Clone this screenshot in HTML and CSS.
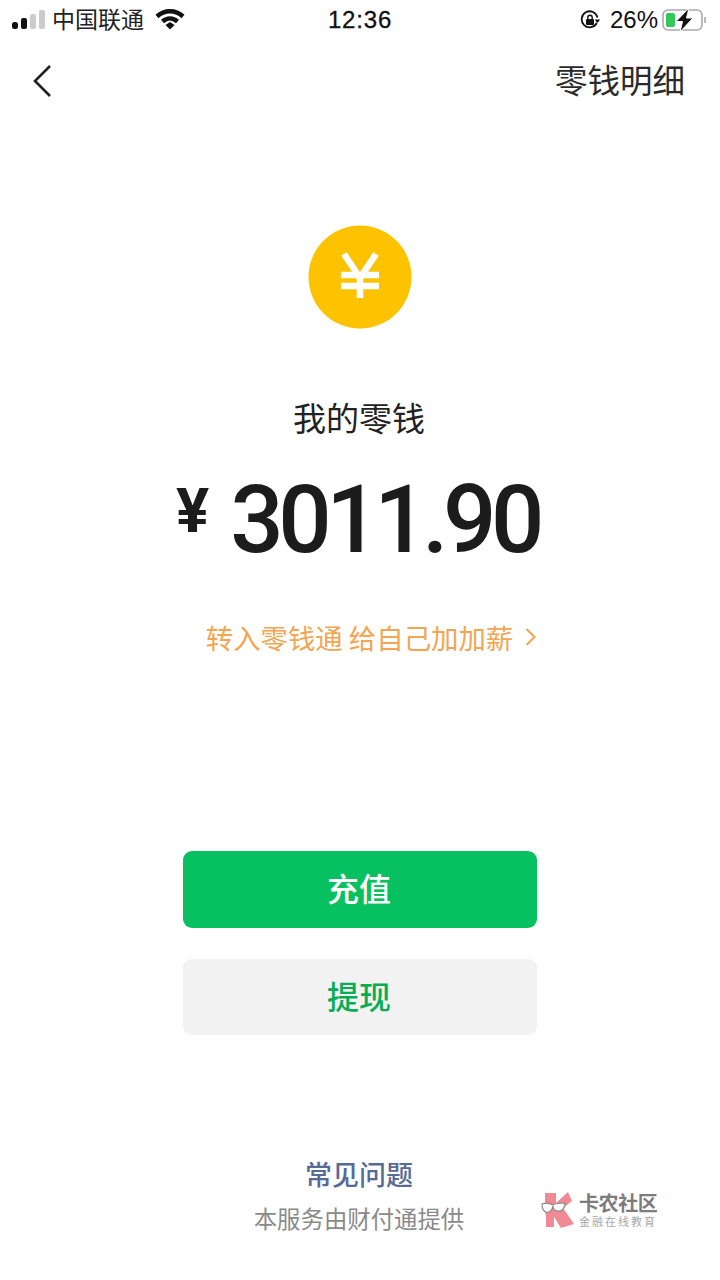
FILE: index.html
```html
<!DOCTYPE html>
<html lang="zh-CN">
<head>
<meta charset="utf-8">
<title>我的零钱</title>
<link rel="stylesheet" href="styles.css">
</head>
<body>
<div class="page">
  <header class="status">
    <div class="status-left">
      <svg class="signal" width="34" height="20" viewBox="0 0 34 20"><rect x="0" y="12" width="6" height="7" rx="2.5" fill="#111"/><rect x="9" y="8" width="6" height="11" rx="2" fill="#111"/><rect x="18" y="4" width="6" height="15" rx="2" fill="#ccc"/><rect x="27" y="0" width="6" height="19" rx="2" fill="#ccc"/></svg>
      <span class="carrier">中国联通</span>
      <svg class="wifi" width="30" height="22" viewBox="0 0 30 22"><path d="M2 8.500C9.500 1.500 20.500 1.500 28 8.500" fill="none" stroke="#111" stroke-width="4.500"/><path d="M7.500 13.500C12 9.500 18 9.500 22.500 13.500" fill="none" stroke="#111" stroke-width="4.500"/><path d="M10.500 17L15 14L19.500 17L15 21.500Z" fill="#111"/></svg>
    </div>
    <div class="time">12:36</div>
    <div class="status-right">
      <svg class="lock" width="20" height="20" viewBox="0 0 20 20"><path d="M16.800 13A8 8 0 1 1 17.500 7.500" fill="none" stroke="#111" stroke-width="1.800"/><path d="M15 9.500H20L18 12.500H16.500Z" fill="#111"/><rect x="6" y="9" width="8" height="6" rx="1" fill="#111"/><path d="M7.800 9V7.500A2.200 2.200 0 0 1 12.200 7.500V9" fill="none" stroke="#111" stroke-width="1.400"/></svg>
      <span class="percent">26%</span>
      <svg class="battery" width="46" height="24" viewBox="0 0 46 24"><rect x="1" y="2" width="39" height="20" rx="5" fill="none" stroke="#aaa" stroke-width="1.600"/><rect x="4" y="5" width="9" height="14" rx="2" fill="#34c759"/><path d="M43 9V15" stroke="#bbb" stroke-width="2"/><path d="M27 0L14 13.500H20.500L18 24L31 10H24.500Z" fill="#111" stroke="#fff" stroke-width="1"/></svg>
    </div>
  </header>
  <nav class="nav">
    <svg class="back" width="20" height="34" viewBox="0 0 20 34"><path d="M18 2L3 17L18 32" fill="none" stroke="#222" stroke-width="2.600"/></svg>
    <span class="detail">零钱明细</span>
  </nav>
  <main class="main">
    <svg class="coin" width="104" height="104" viewBox="0 0 104 104"><circle cx="52" cy="52" r="51.500" fill="#fdc300"/><path d="M36 29L52 53L68 29M52 53V73M33 50H71M33 61H71" fill="none" stroke="#fff" stroke-width="6.500"/></svg>
    <h1 class="label">我的零钱</h1>
    <div class="amount"><span class="yen">¥</span><span class="value">3011.90</span></div>
    <a class="promo">转入零钱通 给自己加加薪<svg class="promo-arrow" width="11" height="20" viewBox="0 0 11 20"><path d="M1.500 2L9.500 10L1.500 18" fill="none" stroke="#f2a552" stroke-width="2"/></svg></a>
    <div class="actions">
      <button class="btn btn-primary">充值</button>
      <button class="btn btn-secondary">提现</button>
    </div>
  </main>
  <footer class="footer">
    <a class="faq">常见问题</a>
    <p class="provider">本服务由财付通提供</p>
    <div class="mark">
      <svg width="36" height="38" viewBox="0 0 36 38"><path d="M4 2H15V12L27 1L31 10L22 17L33 33L20 37L13 26V36H5V24L1 14L4 13Z" fill="#ee7682"/><path d="M1 13C6 11 10 13 12 14C15 12 20 12 24 12C24 17 21 21 17 20C14 20 12 18 12 15C11 20 8 22 5 21C2 20 1 16 1 13Z" fill="#fff" stroke="#777" stroke-width="1.200"/></svg>
      <div class="mark-text">
        <span class="mark-title">卡农社区</span>
        <span class="mark-sub">金融在线教育</span>
      </div>
    </div>
  </footer>
</div>
</body>
</html>
```

FILE: styles.css
```css
* { box-sizing: border-box; }
html, body { margin: 0; padding: 0; background: #fff; }
body { font-family: "Noto Sans CJK SC", "Noto Sans", sans-serif; color: #1c1c1c; }
.page { width: 720px; height: 1280px; display: flex; flex-direction: column; position: relative; overflow: hidden; background: #fff; }
.status { height: 40px; padding: 0 12px; display: grid; grid-template-columns: 1fr auto 1fr; align-items: center; }
.status-left { display: flex; align-items: center; gap: 6px; }
.carrier { font-size: 23px; line-height: 30px; color: #222; margin-top: -4px; }
.wifi { margin-left: 5px; margin-top: -2px; }
.time { font-family: "Liberation Sans", sans-serif; font-size: 24px; font-weight: 400; color: #111; letter-spacing: 0.8px; -webkit-text-stroke: 0.3px #111; }
.status-right { display: flex; align-items: center; justify-content: flex-end; gap: 0; }
.percent { font-family: "Liberation Sans", sans-serif; font-size: 24px; color: #111; margin: 0 4px 0 10px; }
.nav { height: 80px; padding: 0 35px 0 32px; display: flex; align-items: center; justify-content: space-between; }
.back { margin-top: 1px; }
.detail { font-size: 32.500px; line-height: 44px; color: #2a2a2a; margin-top: -2px; }
.main { flex: 1; display: flex; flex-direction: column; align-items: center; padding-top: 105px; }
.coin { display: block; }
.label { margin: 66px 2px 0 0; font-size: 33px; line-height: 44px; font-weight: 400; color: #222; }
.amount { margin-top: 31px; height: 100px; display: flex; align-items: flex-start; padding-right: 7px; }
.yen { font-family: "Roboto", sans-serif; font-weight: 700; font-size: 62px; line-height: 72px; margin-right: 21px; margin-top: 5px; margin-left: 2px; color: #1c1c1c; }
.value { font-family: "Roboto", sans-serif; font-weight: 500; font-size: 94px; line-height: 100px; letter-spacing: -5.400px; color: #1c1c1c; }
.promo { margin-top: 48px; display: flex; align-items: center; gap: 12px; font-size: 27.400px; line-height: 38px; color: #f2a552; padding-left: 22px; }
.actions { margin-top: 195px; display: flex; flex-direction: column; gap: 31px; }
.btn { width: 354px; border: 0; border-radius: 9px; font-family: inherit; font-size: 32px; font-weight: 500; display: flex; align-items: center; justify-content: center; padding: 0 2px 5px 0; }
.btn-primary { height: 77px; background: #07c160; color: #fff; }
.btn-secondary { height: 76px; background: #f2f2f2; color: #06ad56; }
.footer { height: 125px; display: flex; flex-direction: column; align-items: center; position: relative; }
.faq { font-size: 27px; line-height: 38px; font-weight: 500; color: #576b95; margin-right: 2px; }
.provider { margin: 7px 2px 0 0; font-size: 23.400px; line-height: 36px; color: #8a8a8a; }
.mark { position: absolute; left: 541px; top: 36px; display: flex; align-items: center; gap: 2px; opacity: 0.85; }
.mark-text { display: flex; flex-direction: column; }
.mark-title { font-size: 20px; line-height: 22px; font-weight: 700; color: #666; letter-spacing: -0.400px; }
.mark-sub { font-size: 11px; line-height: 14px; color: #999; letter-spacing: 2px; }
```
